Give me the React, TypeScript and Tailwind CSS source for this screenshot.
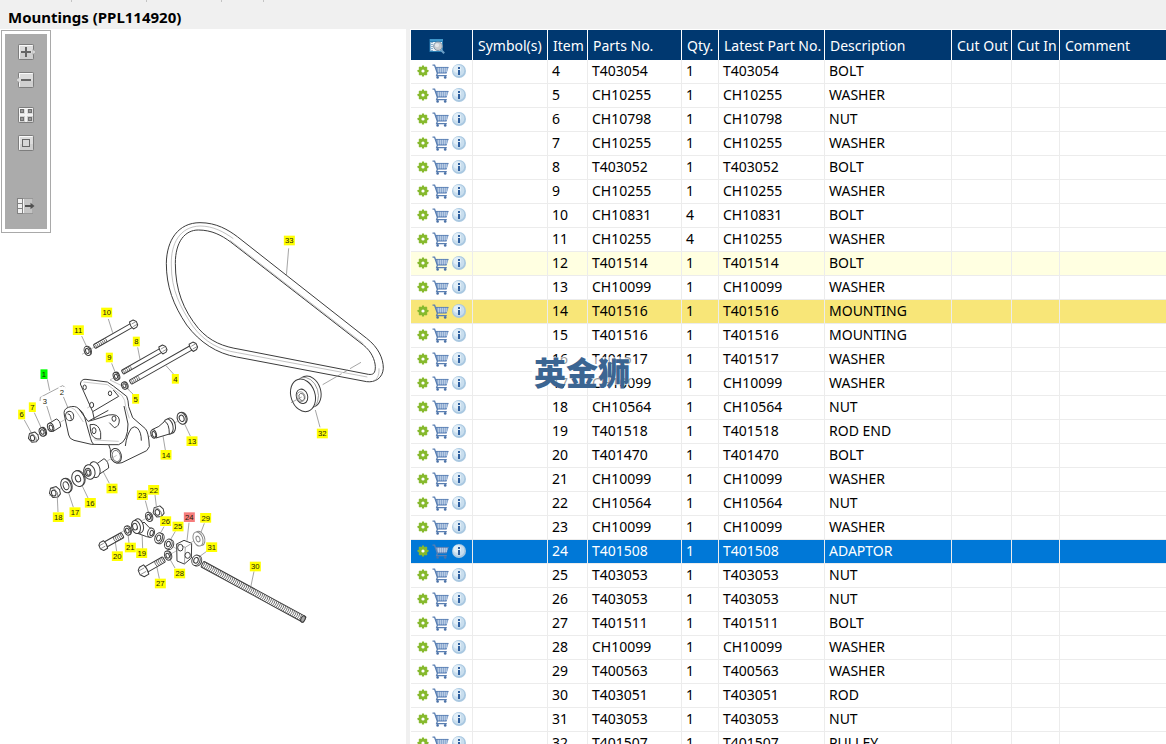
import { useState } from "react";

type Part = { item: number; no: string; qty: number; name: string };

const PARTS: Part[] = [
  { item: 4, no: "T403054", qty: 1, name: "BOLT" },
  { item: 5, no: "CH10255", qty: 1, name: "WASHER" },
  { item: 6, no: "CH10798", qty: 1, name: "NUT" },
  { item: 7, no: "CH10255", qty: 1, name: "WASHER" },
  { item: 8, no: "T403052", qty: 1, name: "BOLT" },
  { item: 9, no: "CH10255", qty: 1, name: "WASHER" },
  { item: 10, no: "CH10831", qty: 4, name: "BOLT" },
  { item: 11, no: "CH10255", qty: 4, name: "WASHER" },
  { item: 12, no: "T401514", qty: 1, name: "BOLT" },
  { item: 13, no: "CH10099", qty: 1, name: "WASHER" },
  { item: 14, no: "T401516", qty: 1, name: "MOUNTING" },
  { item: 15, no: "T401516", qty: 1, name: "MOUNTING" },
  { item: 16, no: "T401517", qty: 1, name: "WASHER" },
  { item: 17, no: "CH10099", qty: 1, name: "WASHER" },
  { item: 18, no: "CH10564", qty: 1, name: "NUT" },
  { item: 19, no: "T401518", qty: 1, name: "ROD END" },
  { item: 20, no: "T401470", qty: 1, name: "BOLT" },
  { item: 21, no: "CH10099", qty: 1, name: "WASHER" },
  { item: 22, no: "CH10564", qty: 1, name: "NUT" },
  { item: 23, no: "CH10099", qty: 1, name: "WASHER" },
  { item: 24, no: "T401508", qty: 1, name: "ADAPTOR" },
  { item: 25, no: "T403053", qty: 1, name: "NUT" },
  { item: 26, no: "T403053", qty: 1, name: "NUT" },
  { item: 27, no: "T401511", qty: 1, name: "BOLT" },
  { item: 28, no: "CH10099", qty: 1, name: "WASHER" },
  { item: 29, no: "T400563", qty: 1, name: "WASHER" },
  { item: 30, no: "T403051", qty: 1, name: "ROD" },
  { item: 31, no: "T403053", qty: 1, name: "NUT" },
  { item: 32, no: "T401507", qty: 1, name: "PULLEY" },
];

/* ---------- icons ---------- */

function GearIcon() {
  return (
    <svg viewBox="0 0 12 12" className="block h-3 w-3" aria-hidden="true">
      <g fill="#86b92d">
        {[0, 45, 90, 135].map((a) => (
          <rect key={a} x="4.8" y="0.6" width="2.4" height="10.8" rx="0.4" transform={`rotate(${a} 6 6)`} />
        ))}
        <circle cx="6" cy="6" r="4.3" />
      </g>
      <circle cx="6" cy="6" r="1.6" fill="#fff" />
    </svg>
  );
}

function CartIcon() {
  return (
    <svg viewBox="0 0 17 15" className="block h-[15px] w-[17px]" aria-hidden="true">
      <path d="M3.2 3H16.6L14.8 9H5Z" fill="#6f93c4" />
      <path d="M4.2 5H15.8M4.8 7H15M6.5 3.4V8.6M8.5 3.4V8.6M10.5 3.4V8.6M12.5 3.4V8.6M14.3 3.6V8" stroke="#d5e1f0" strokeWidth="0.6" />
      <path d="M0.5 1.2H2.6L5.4 9.2L4.6 11.6H14.8" fill="none" stroke="#5a7fb2" strokeWidth="1.3" />
      <path d="M3 3.4H16.4M5.2 9.2H14.6" stroke="#5a7fb2" strokeWidth="0.8" />
      <circle cx="5.6" cy="13.4" r="1.3" fill="#4b72a8" />
      <circle cx="13.2" cy="13.4" r="1.3" fill="#4b72a8" />
    </svg>
  );
}

function InfoIcon() {
  return (
    <svg viewBox="0 0 14 14" className="block h-3.5 w-3.5" aria-hidden="true">
      <circle cx="7" cy="7" r="7" fill="#a9c8e1" />
      <circle cx="6.6" cy="6.4" r="5.7" fill="#c9deee" />
      <circle cx="5.4" cy="5" r="3.8" fill="#e2eff8" />
      <rect x="6" y="3" width="2" height="2" fill="#2f5f9e" />
      <path d="M6 6H8V11H6Z" fill="#2f5f9e" />
    </svg>
  );
}

function FindIcon() {
  return (
    <svg viewBox="0 0 16 16" className="block h-4 w-4" aria-hidden="true">
      <rect x="0.5" y="1" width="13.5" height="13" fill="#2b7fb5" />
      <rect x="1" y="1" width="13" height="2" fill="#3f97cb" />
      <rect x="1.5" y="4" width="11.5" height="9" fill="#e9f2f8" />
      <path d="M3 4V13" stroke="#2b6aa0" strokeWidth="1" strokeDasharray="1 1" />
      <path d="M11.5 11.5L15.2 15.2" stroke="#6d9fc6" strokeWidth="2" />
      <circle cx="9" cy="8.2" r="4.3" fill="#c9ccd0" stroke="#7d93a8" strokeWidth="1" />
      <circle cx="8" cy="7.2" r="2" fill="#e4e7ea" />
    </svg>
  );
}

function KeyFace() {
  return (
    <>
      <rect x="2.5" y="0.5" width="15" height="15" rx="0.8" fill="#dcdcdc" stroke="#7d7d7d" />
      <path d="M3.5 14.5V1.5H16.5" fill="none" stroke="#fafafa" />
      <rect x="4" y="9" width="13" height="6" fill="#c9c9c9" opacity="0.7" />
    </>
  );
}

function ZoomInIcon() {
  return (
    <svg viewBox="0 0 20 16" className="block h-4 w-5" aria-hidden="true">
      <KeyFace />
      <path d="M17 5.5L19.5 8L17 10.5Z" fill="#f4f4f4" stroke="#8a8a8a" strokeWidth="0.5" />
      <path d="M5 8H15M10 3V13" stroke="#666" strokeWidth="2" />
    </svg>
  );
}

function ZoomOutIcon() {
  return (
    <svg viewBox="0 0 20 16" className="block h-4 w-5" aria-hidden="true">
      <KeyFace />
      <path d="M3 5.5L0.5 8L3 10.5Z" fill="#f4f4f4" stroke="#8a8a8a" strokeWidth="0.5" />
      <path d="M5 8H15" stroke="#666" strokeWidth="2" />
    </svg>
  );
}

function TilesIcon() {
  return (
    <svg viewBox="0 0 20 16" className="block h-4 w-5" aria-hidden="true">
      <KeyFace />
      <path d="M10 1V15M3 8H17" stroke="#f3f3f3" strokeWidth="2" />
      <g fill="#999" stroke="#707070">
        <rect x="4.5" y="2.5" width="3" height="3" />
        <rect x="12.5" y="2.5" width="3" height="3" />
        <rect x="4.5" y="10.5" width="3" height="3" />
        <rect x="12.5" y="10.5" width="3" height="3" />
      </g>
    </svg>
  );
}

function FitIcon() {
  return (
    <svg viewBox="0 0 20 16" className="block h-4 w-5" aria-hidden="true">
      <KeyFace />
      <rect x="6.5" y="4.5" width="7" height="7" fill="#d6d6d6" stroke="#666" />
    </svg>
  );
}

function ExportIcon() {
  return (
    <svg viewBox="0 0 20 16" className="block h-4 w-5" aria-hidden="true">
      <rect x="7" y="1" width="9" height="14" fill="#c4c4c4" />
      <path d="M2 0.5H17M2 15.5H17" stroke="#989898" />
      <g fill="#f0f0f0" stroke="#828282">
        <rect x="1.5" y="0.5" width="5" height="5" />
        <rect x="1.5" y="5.5" width="5" height="5" />
        <rect x="1.5" y="10.5" width="5" height="5" />
      </g>
      <path d="M7.5 1V15" stroke="#f5f5f5" />
      <path d="M9 8H15" stroke="#505050" strokeWidth="2" />
      <path d="M14.5 4.8L18.5 8L14.5 11.2Z" fill="#505050" />
    </svg>
  );
}

/* ---------- exploded drawing, in thirds of a pixel ---------- */

const INK = "#3c3c3c";

function Callout({ x, y, n, fill = "#ffff00" }: { x: number; y: number; n: number; fill?: string }) {
  const w = n > 9 ? 33 : 21;
  return (
    <g stroke="none">
      <rect x={x - w / 2} y={y - 15} width={w} height={29} fill={fill} />
      <text x={x} y={y + 8} textAnchor="middle" fill="#1c1c08">
        {n}
      </text>
    </g>
  );
}

function Ring({ x, y, rx, ry, hole = 0.55, rot = -20, thick = 3 }: { x: number; y: number; rx: number; ry: number; hole?: number; rot?: number; thick?: number }) {
  return (
    <g transform={`translate(${x} ${y}) rotate(${rot})`} fill="#fff">
      <ellipse cx={thick} cy={0} rx={rx} ry={ry} />
      <ellipse cx={0} cy={0} rx={rx} ry={ry} />
      <ellipse cx={0} cy={0} rx={rx * hole} ry={ry * hole} />
    </g>
  );
}

function Nut({ x, y, r }: { x: number; y: number; r: number }) {
  return (
    <g transform={`translate(${x} ${y}) rotate(-12)`} fill="#fff">
      <path d={`M${-r} 0L${-r * 0.6} ${-r * 0.9}L${r * 0.5} ${-r}L${r} ${-r * 0.3}L${r} ${r * 0.5}L${r * 0.4} ${r}L${-r * 0.5} ${r * 0.9}Z`} />
      <path d={`M${-r * 0.6} ${-r * 0.9}L${r * 0.1} ${-r * 0.6}L${r * 0.5} ${r * 0.2}L${r * 0.4} ${r}`} strokeWidth="1.8" />
      <ellipse cx={-r * 0.2} cy={r * 0.1} rx={r * 0.42} ry={r * 0.55} />
    </g>
  );
}

type BoltProps = { x1: number; y1: number; x2: number; y2: number; w: number; thread: number; head: number };

function Bolt({ x1, y1, x2, y2, w, thread, head }: BoltProps) {
  const len = Math.hypot(x2 - x1, y2 - y1);
  const angle = (Math.atan2(y2 - y1, x2 - x1) * 180) / Math.PI;
  const turns = Array.from({ length: Math.floor(thread / 6) }, (_, i) => i * 6 + 4);
  const h = head / 2;
  return (
    <g transform={`translate(${x1} ${y1}) rotate(${angle})`} fill="#fff">
      <rect x={0} y={-w / 2} width={len} height={w} rx={3} />
      {turns.map((t) => (
        <path key={t} d={`M${t} ${-w / 2}Q${t + 3} 0 ${t} ${w / 2}`} strokeWidth="2" fill="none" />
      ))}
      {head > 0 && (
        <g>
          <path d={`M${len - 3} ${-h}L${len + h * 0.8} ${-h}L${len + h * 1.3} ${-h * 0.3}L${len + h * 1.2} ${h * 0.6}L${len + h * 0.7} ${h}L${len - 3} ${h}Q${len - 8} 0 ${len - 3} ${-h}Z`} />
          <path d={`M${len} ${-h * 0.3}H${len + h * 1.2}M${len} ${h * 0.45}H${len + h * 1.2}`} strokeWidth="1.5" />
        </g>
      )}
    </g>
  );
}

function Drawing() {
  return (
    <svg
      viewBox="0 87 1218 2145"
      className="block w-full"
      role="img"
      aria-label="Exploded view of the mountings"
      fill="none"
      stroke={INK}
      strokeWidth="3"
      strokeLinejoin="round"
      fontFamily="'Liberation Sans', Arial, sans-serif"
      fontSize="23"
    >
      {/* belt and pulley */}
      <g transform="translate(450 630)">
        <path d="M49 160C50 90 85 38 150 38C200 38 235 60 262 80L650 385C685 412 700 445 700 475C698 505 675 518 650 515L260 441C200 430 150 398 110 345C70 285 49 230 49 160Z" />
        <path d="M76 160C76 95 105 60 145 60C185 60 215 76 242 96L640 405C665 425 675 450 676 470C676 490 670 495 655 493L270 418C220 410 180 395 145 355C100 300 76 240 76 160Z" />
        <path d="M64 165C62 100 90 50 150 48C190 48 222 66 250 86M687 475C688 500 680 508 668 514M64 165C64 240 90 290 128 348C165 398 210 420 262 428L652 501M240 91L640 401" stroke="#999" strokeWidth="1.8" />
        <path d="M518 524L575 491M580 488L594 480M600 476L633 457" stroke="#777" strokeWidth="2" />
        <g fill="#fff">
          <ellipse cx="477" cy="545" rx="35" ry="48" transform="rotate(-18 477 545)" />
          <ellipse cx="469" cy="549" rx="35" ry="48" stroke="#777" strokeWidth="2" transform="rotate(-18 469 549)" />
          <ellipse cx="459" cy="556" rx="36" ry="50" transform="rotate(-18 459 556)" />
          <ellipse cx="456" cy="559" rx="17" ry="22" transform="rotate(-18 456 559)" />
          <ellipse cx="453" cy="560" rx="12" ry="15" stroke="#777" strokeWidth="2" transform="rotate(-18 453 560)" />
          <ellipse cx="455" cy="561" rx="8" ry="11" strokeWidth="2" transform="rotate(-18 455 561)" />
        </g>
        <path d="M423 578L455 561M416 115L409 198M496 600L510 652" stroke="#777" strokeWidth="2" />
        <Callout x={418} y={92} n={33} />
        <Callout x={517} y={671} n={32} />
      </g>

      {/* bracket and its bolts */}
      <g transform="translate(0 900)">
        <path d="M246 163L285 140M388 268L330 240L345 231M88 420L210 350M262 324L276 316M440 415L462 400M522 370L560 348" stroke="#999" strokeWidth="1.8" />
        <path d="M325 57L338 98M245 108L260 140M413 142L420 178M335 190L346 218M524 226L498 197M403 286L380 264M142 238L149 272M120 303L121 292L188 257L196 263M190 290L204 324M140 317L154 362M103 338L123 382M73 360L95 400M571 408L552 368M496 450L489 408" stroke="#777" strokeWidth="2" />
        <Bolt x1={283} y1={140} x2={397} y2={75} w={13} thread={42} head={24} />
        <Bolt x1={367} y1={217} x2={485} y2={150} w={13} thread={32} head={24} />
        <Bolt x1={391} y1={247} x2={576} y2={142} w={14} thread={34} head={25} />
        <Ring x={262} y={153} rx={9} ry={14} />
        <Ring x={348} y={229} rx={8} ry={12} />
        <Ring x={373} y={257} rx={8} ry={11} />
        <path d="M258 238L322 246L340 258L380 289Q385 300 386 320L398 353L436 386Q446 396 448 440L440 452L366 488Q346 494 335 478Q330 465 331 448L326 434L274 433L222 421Q208 417 206 405L193 345Q189 328 205 322Q225 315 236 326L264 364L283 359L278 335L241 252Q244 236 258 238Z" fill="#fff" />
        <path d="M278 335L356 289L340 270M268 362L325 331M283 359L326 345Q356 340 358 360Q358 380 343 383L328 368M270 374Q296 368 302 398L302 417Q278 420 272 395ZM376 438Q380 405 394 385Q404 376 412 384Q424 396 424 422M326 434L356 434Q384 424 384 372L372 318M236 326Q250 335 254 352L272 416Q275 428 280 432" />
        <path d="M250 246L322 254L366 287Q376 298 377 320L388 355M283 420L356 424M212 322Q226 326 234 342L250 366" stroke="#999" strokeWidth="1.6" />
        <g fill="#fff">
          <ellipse cx="209" cy="348" rx="12" ry="14" transform="rotate(-15 209 348)" />
          <path d="M203 342Q212 340 214 358" />
          <ellipse cx="254" cy="262" rx="5" ry="7" />
          <ellipse cx="330" cy="280" rx="5" ry="7" />
          <ellipse cx="275" cy="315" rx="6" ry="8" />
          <ellipse cx="342" cy="356" rx="6" ry="8" />
          <ellipse cx="282" cy="392" rx="6" ry="9" />
          <ellipse cx="348" cy="467" rx="16" ry="22" transform="rotate(-15 348 467)" />
          <ellipse cx="349" cy="468" rx="12" ry="17" strokeWidth="2" transform="rotate(-15 349 468)" />
          <path d="M146 371L169 357Q181 361 182 380L160 394Z" />
          <ellipse cx="152" cy="382" rx="9" ry="13" transform="rotate(-20 152 382)" />
          <ellipse cx="153" cy="383" rx="5" ry="8" transform="rotate(-20 153 383)" />
          <ellipse cx="512" cy="377" rx="14" ry="23" transform="rotate(-12 512 377)" />
          <ellipse cx="505" cy="380" rx="14" ry="23" transform="rotate(-12 505 380)" />
          <path d="M456 389Q478 382 494 364Q508 370 508 402L468 414Z" />
          <ellipse cx="461" cy="402" rx="8" ry="13" transform="rotate(-18 461 402)" />
          <ellipse cx="462" cy="403" rx="5" ry="9" transform="rotate(-18 462 403)" />
        </g>
        <Ring x={545} y={355} rx={13} ry={18} />
        <Ring x={127} y={396} rx={9} ry={13} />
        <Nut x={100} y={412} r={15} />
        <Callout x={320} y={38} n={10} />
        <Callout x={235} y={91} n={11} />
        <Callout x={409} y={125} n={8} />
        <Callout x={328} y={173} n={9} />
        <Callout x={526} y={237} n={4} />
        <Callout x={407} y={297} n={5} />
        <Callout x={132} y={223} n={1} fill="#00ff00" />
        <Callout x={186} y={276} n={2} fill="#ffffff" />
        <Callout x={135} y={304} n={3} fill="#ffffff" />
        <Callout x={97} y={322} n={7} />
        <Callout x={65} y={344} n={6} />
        <Callout x={576} y={424} n={13} />
        <Callout x={498} y={465} n={14} />
      </g>

      {/* lower mounting and adjuster */}
      <g transform="translate(0 1290)">
        <path d="M148 197L350 76M322 330L480 242M440 305L620 408M490 385L600 322" stroke="#999" strokeWidth="1.8" />
        <path d="M328 160L308 122M264 204L244 162M220 232L205 186M174 246L172 204M436 212L445 246M465 195L469 228M492 290L481 310M526 304L512 328M567 278L561 332M613 280L601 312M620 364L598 380M387 340L384 312M428 356L426 304M350 364L345 330M525 414L510 388M478 446L470 408" stroke="#777" strokeWidth="2" />
        <g fill="#fff">
          <path d="M284 106L312 86Q326 94 326 114L296 134Z" />
          <ellipse cx="284" cy="119" rx="16" ry="24" transform="rotate(-12 284 119)" />
          <ellipse cx="268" cy="126" rx="17" ry="22" transform="rotate(-12 268 126)" />
          <ellipse cx="264" cy="127" rx="9" ry="12" transform="rotate(-12 264 127)" />
          <ellipse cx="265" cy="128" rx="5" ry="8" transform="rotate(-12 265 128)" />
        </g>
        <Ring x={234} y={146} rx={18} ry={24} hole={0.42} />
        <Ring x={198} y={167} rx={15} ry={22} />
        <Nut x={164} y={187} r={16} />
        <Bolt x1={368} y1={315} x2={314} y2={345} w={17} thread={30} head={26} />
        <Ring x={382} y={302} rx={9} ry={14} />
        <g fill="#fff">
          <path d="M402 306L440 320Q460 326 463 308Q463 296 448 293L432 276Z" />
          <ellipse cx="416" cy="288" rx="14" ry="22" transform="rotate(-15 416 288)" />
          <ellipse cx="408" cy="291" rx="13" ry="20" transform="rotate(-15 408 291)" />
          <ellipse cx="405" cy="290" rx="7" ry="10" transform="rotate(-15 405 290)" />
          <ellipse cx="453" cy="308" rx="10" ry="14" transform="rotate(15 453 308)" />
          <ellipse cx="455" cy="309" rx="5" ry="8" transform="rotate(15 455 309)" />
        </g>
        <Ring x={446} y={261} rx={9} ry={14} />
        <Nut x={475} y={245} r={16} />
        <Ring x={476} y={324} rx={11} ry={16} rot={20} thick={5} />
        <Ring x={505} y={342} rx={11} ry={15} rot={20} thick={5} />
        <Ring x={503} y={377} rx={9} ry={14} />
        <g stroke="#888">
          <Ring x={594} y={327} rx={14} ry={22} hole={0.4} thick={6} />
        </g>
        <g fill="#fff">
          <path d="M530 342L552 331L575 340L574 384L553 402L531 393Z" />
          <path d="M530 342L556 352L575 340M556 352L553 402" stroke="#777" strokeWidth="2" />
          <ellipse cx="541" cy="353" rx="8" ry="10" />
          <ellipse cx="563" cy="376" rx="8" ry="9" />
        </g>
        <Bolt x1={492} y1={388} x2={436} y2={420} w={18} thread={30} head={32} />
        <Ring x={588} y={391} rx={12} ry={16} rot={20} thick={5} />
        <Bolt x1={607} y1={402} x2={914} y2={569} w={19} thread={340} head={0} />
        <ellipse cx="909" cy="567" rx="6" ry="10" fill="#aaa" transform="rotate(28 909 567)" />
        <path d="M762 424L752 472" stroke="#777" strokeWidth="2" />
        <Callout x={336} y={176} n={15} />
        <Callout x={271} y={219} n={16} />
        <Callout x={225} y={247} n={17} />
        <Callout x={175} y={262} n={18} />
        <Callout x={427} y={196} n={23} />
        <Callout x={461} y={180} n={22} />
        <Callout x={497} y={274} n={26} />
        <Callout x={534} y={290} n={25} />
        <Callout x={568} y={262} n={24} fill="#f67c7c" />
        <Callout x={617} y={264} n={29} />
        <Callout x={635} y={352} n={31} />
        <Callout x={391} y={353} n={21} />
        <Callout x={425} y={370} n={19} />
        <Callout x={352} y={379} n={20} />
        <Callout x={539} y={431} n={28} />
        <Callout x={481} y={461} n={27} />
        <Callout x={766} y={410} n={30} />
      </g>
    </svg>
  );
}

/* ---------- page ---------- */

function ViewerTools() {
  return (
    <div role="toolbar" aria-label="Drawing view" className="absolute top-px left-px border border-[#a9a9a9] bg-white p-[3px]">
      <div className="flex h-[195px] w-[42px] flex-col items-center bg-[#ababab] pt-2.5">
        <div className="flex flex-col gap-3">
          <button type="button" aria-label="Zoom in"><ZoomInIcon /></button>
          <button type="button" aria-label="Zoom out"><ZoomOutIcon /></button>
        </div>
        <div className="mt-[19px] flex flex-col gap-3">
          <button type="button" aria-label="Show tiles"><TilesIcon /></button>
          <button type="button" aria-label="Fit to window"><FitIcon /></button>
        </div>
        <button type="button" aria-label="Hide parts list" className="mt-[47px]"><ExportIcon /></button>
      </div>
    </div>
  );
}

const HEADINGS = ["Symbol(s)", "Item", "Parts No.", "Qty.", "Latest Part No.", "Description", "Cut Out", "Cut In", "Comment"];

function rowColours(item: number, selected: number) {
  if (item === selected) return "bg-[#0078d7] text-white";
  if (item === 14) return "bg-[#f8e678]";
  if (item === 12) return "bg-[#ffffe1]";
  return "bg-white";
}

function PartsTable() {
  const [selected, setSelected] = useState(24);
  return (
    <table className="w-full table-fixed border-separate border-spacing-0 text-left text-sm whitespace-nowrap">
      <colgroup>
        <col className="w-[62px]" />
        <col className="w-[75px]" />
        <col className="w-10" />
        <col className="w-[94px]" />
        <col className="w-[37px]" />
        <col className="w-[106px]" />
        <col className="w-[127px]" />
        <col className="w-[60px]" />
        <col className="w-12" />
        <col />
      </colgroup>
      <thead>
        <tr className="h-[30px] bg-[#003870] text-white *:border-r *:border-white *:p-0 *:pt-0.5 *:last:border-r-0">
          <th>
            <button type="button" aria-label="Search parts" className="ml-[18px] block"><FindIcon /></button>
          </th>
          {HEADINGS.map((h) => (
            <th key={h} scope="col" className="font-normal">
              <span className="pl-[5px]">{h}</span>
            </th>
          ))}
        </tr>
      </thead>
      <tbody>
        {PARTS.map((p) => (
          <tr
            key={p.item}
            onClick={() => setSelected(p.item)}
            className={`h-6 align-top leading-[22px] *:border-r *:border-b *:border-[#ececec] *:p-0 *:pl-1 *:last:border-r-0 ${rowColours(p.item, selected)}`}
          >
            <td>
              <div className="flex h-[22px] items-center gap-[3px] pl-0.5">
                <button type="button" aria-label={`Options for item ${p.item}`}><GearIcon /></button>
                <button type="button" aria-label={`Add item ${p.item} to cart`}><CartIcon /></button>
                <button type="button" aria-label={`Details of item ${p.item}`}><InfoIcon /></button>
              </div>
            </td>
            <td />
            <td>{p.item}</td>
            <td>{p.no}</td>
            <td>{p.qty}</td>
            <td>{p.no}</td>
            <td>{p.name}</td>
            <td />
            <td />
            <td />
          </tr>
        ))}
      </tbody>
    </table>
  );
}

export default function App() {
  return (
    <div className="flex h-screen flex-col overflow-hidden bg-[#f0f0f0] font-['Noto_Sans','Open_Sans',sans-serif] text-sm text-black">
      <header className="relative flex h-[29px] shrink-0 items-center px-2 pt-1">
        <div aria-hidden="true" className="absolute top-0 left-0 flex h-0.5">
          <span className="w-[72px] border-r border-[#c4c4c4]" />
          <span className="w-[75px] border-r border-[#c4c4c4]" />
          <span className="w-[75px] border-r border-[#c4c4c4]" />
          <span className="w-[42px] border-r border-[#c4c4c4]" />
        </div>
        <h1 className="text-[15px] leading-5 font-bold">Mountings (PPL114920)</h1>
      </header>
      <main className="flex min-h-0 flex-1 gap-1">
        <section aria-label="Drawing" className="relative w-[406px] shrink-0 overflow-hidden bg-white">
          <Drawing />
          <ViewerTools />
        </section>
        <section aria-label="Parts list" className="relative min-w-0 flex-1 overflow-auto bg-white pt-px pl-px [scrollbar-width:none]">
          <PartsTable />
          <div className="pointer-events-none absolute top-[328px] left-[122px] bg-white/60 px-0.5 font-['Noto_Sans_CJK_SC',sans-serif] text-[32px] leading-7 font-black text-[#3b6592]">
            英金狮
          </div>
        </section>
      </main>
    </div>
  );
}
